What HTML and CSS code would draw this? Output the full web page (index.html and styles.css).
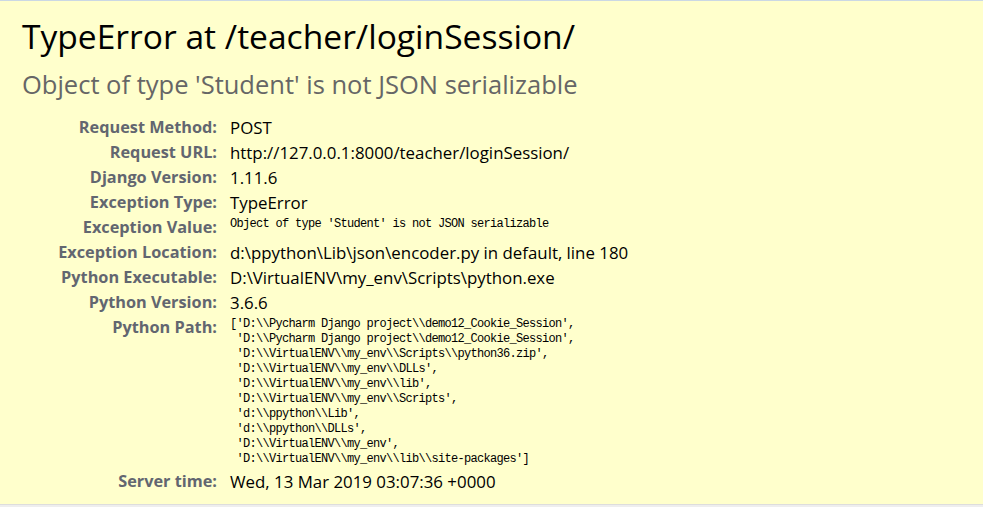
FILE: index.html
```
<!DOCTYPE html>
<html lang="en">
<head>
<meta charset="utf-8">
<title>TypeError at /teacher/loginSession/</title>
<link rel="stylesheet" href="styles.css">
</head>
<body>
<div class="summary">
  <h1 class="title">TypeError at /teacher/loginSession/</h1>
  <pre class="exception-value">Object of type 'Student' is not JSON serializable</pre>
  <table class="meta">
    <tbody>
      <tr><th>Request Method:</th><td>POST</td></tr>
      <tr><th>Request URL:</th><td>http://127.0.0.1:8000/teacher/loginSession/</td></tr>
      <tr><th>Django Version:</th><td>1.11.6</td></tr>
      <tr><th>Exception Type:</th><td>TypeError</td></tr>
      <tr><th>Exception Value:</th><td><pre class="mono">Object of type 'Student' is not JSON serializable</pre></td></tr>
      <tr><th>Exception Location:</th><td>d:\ppython\Lib\json\encoder.py in default, line 180</td></tr>
      <tr><th>Python Executable:</th><td>D:\VirtualENV\my_env\Scripts\python.exe</td></tr>
      <tr><th>Python Version:</th><td>3.6.6</td></tr>
      <tr><th>Python Path:</th><td><pre class="mono">['D:\\Pycharm Django project\\demo12_Cookie_Session',
 'D:\\Pycharm Django project\\demo12_Cookie_Session',
 'D:\\VirtualENV\\my_env\\Scripts\\python36.zip',
 'D:\\VirtualENV\\my_env\\DLLs',
 'D:\\VirtualENV\\my_env\\lib',
 'D:\\VirtualENV\\my_env\\Scripts',
 'd:\\ppython\\Lib',
 'd:\\ppython\\DLLs',
 'D:\\VirtualENV\\my_env',
 'D:\\VirtualENV\\my_env\\lib\\site-packages']</pre></td></tr>
      <tr><th>Server time:</th><td>Wed, 13 Mar 2019 03:07:36 +0000</td></tr>
    </tbody>
  </table>
</div>
</body>
</html>
```

FILE: styles.css
```
html, body {
  margin: 0;
  padding: 0;
}

body {
  background: #eeeeee;
  font-family: "Open Sans", "Noto Sans", sans-serif;
  height: 507px;
  overflow: hidden;
}

.summary {
  background: #ffffcc;
  border-top: 1px solid #cbd8e4;
  border-bottom: 1px solid #dddddd;
  padding: 15px 22px 10px 22px;
}

.title {
  margin: 0;
  font-size: 33.6px;
  line-height: 40px;
  font-weight: normal;
  color: #000000;
}

.exception-value {
  margin: 13px 0 0 0;
  font-family: "Open Sans", "Noto Sans", sans-serif;
  font-size: 25.5px;
  line-height: 30px;
  color: #666666;
  white-space: pre-wrap;
}

.meta {
  margin-top: 16px;
  border-collapse: collapse;
  border: none;
  font-size: 16.3px;
  line-height: 21px;
}

.meta th,
.meta td {
  vertical-align: top;
  padding: 2px 3px;
}

.meta th {
  width: 192px;
  text-align: right;
  color: #626670;
  font-weight: bold;
  padding-right: 8px;
  white-space: nowrap;
}

.meta td {
  color: #000000;
  padding-left: 5px;
  font-size: 16.85px;
  white-space: nowrap;
}

.mono {
  margin: 0;
  font-family: "Liberation Mono", "DejaVu Sans Mono", monospace;
  font-size: 12px;
  letter-spacing: -0.7px;
  line-height: 15px;
  color: #000000;
  white-space: pre;
}
```
